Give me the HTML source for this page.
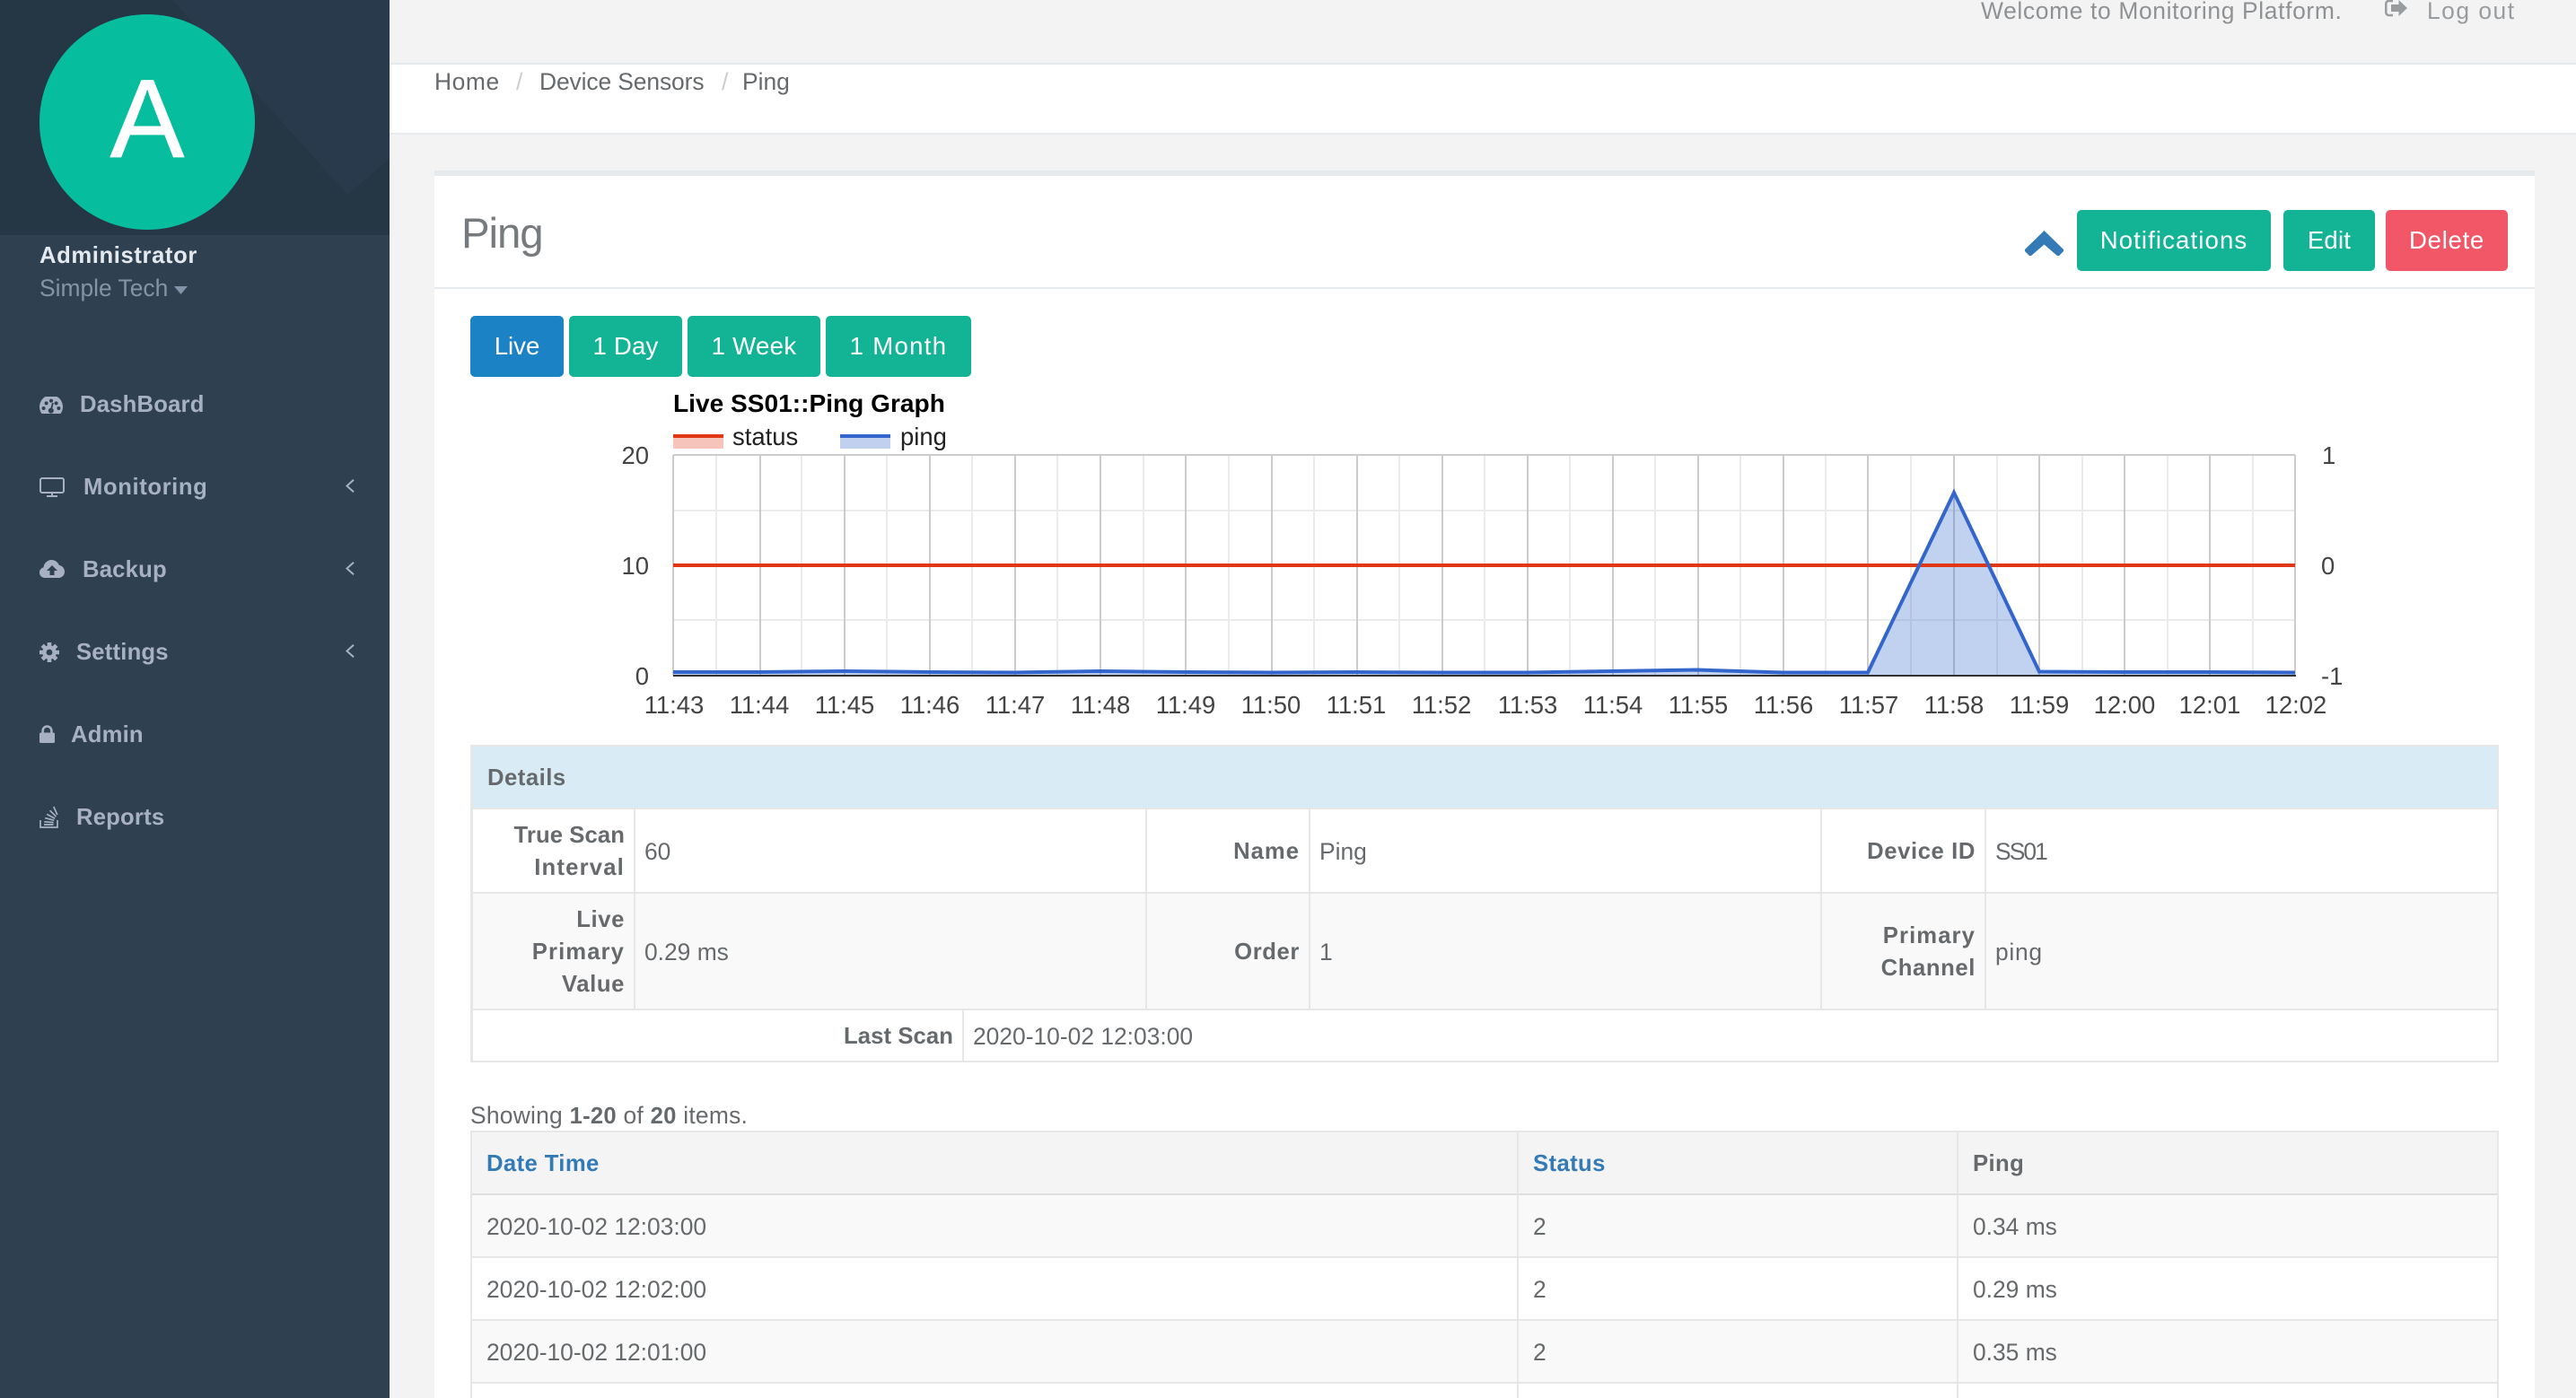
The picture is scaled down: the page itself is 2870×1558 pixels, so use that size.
<!DOCTYPE html>
<html lang="en">
<head>
<meta charset="utf-8">
<title>Ping</title>
<style>
*{box-sizing:border-box;margin:0;padding:0}
html,body{width:2870px;height:1558px;overflow:hidden;background:#f3f3f4}
body{position:relative;font-family:"Liberation Sans",Arial,sans-serif;font-size:26.4px;color:#676a6c}
a{color:inherit;text-decoration:none}
.abs{position:absolute;white-space:nowrap;line-height:36px}
aside{position:absolute;left:0;top:0;width:434px;height:1558px;background:#2f4050}
aside .hdr{position:absolute;left:0;top:0}
.avatar{position:absolute;left:44px;top:16px;width:240px;height:240px;border-radius:50%;background:#06bd9e;color:#fff;font-size:124px;line-height:235px;text-align:center;-webkit-text-stroke:.8px #fff}
nav{position:absolute;left:0;top:405px;width:434px;list-style:none}
nav li{position:relative;height:92px;line-height:92px;color:#a7b1c2;font-weight:bold;font-size:25.65px;letter-spacing:.2px}
nav li svg{position:absolute;left:44px;display:block}
nav li span{position:absolute;top:0}
nav li svg.ch{left:385px;top:37px}
.top{position:absolute;left:434px;top:0;width:2436px;height:72px;background:#f3f3f4;border-bottom:2px solid #e7eaec}
.crumb{position:absolute;left:434px;top:72px;width:2436px;height:78px;background:#fff;border-bottom:2px solid #e7eaec}
.card{position:absolute;left:484px;top:190px;width:2340px;height:1368px;background:#fff;border-top:6px solid #e7eaec}
.ctitle{position:absolute;left:484px;top:320px;width:2340px;height:2px;background:#e7eaec}
.btn{position:absolute;height:68px;line-height:68px;border-radius:5px;color:#fff;text-align:center;font-size:27.6px;white-space:nowrap}
.g{background:#12b495}.r{background:#f15766}.b{background:#1b83c5}
table{position:absolute;left:524px;width:2260px;table-layout:fixed;border-collapse:separate;border-spacing:0;border-left:2px solid #e7e7e7;border-right:2px solid #e7e7e7;line-height:36px}
table.det{border-left-width:3px}
th,td{box-sizing:border-box;border-bottom:2px solid #e7e7e7;border-right:2px solid #e7e7e7;vertical-align:middle;font-weight:normal}
tr>*:last-child{border-right:0}
th{font-weight:bold;font-size:25.65px;letter-spacing:.6px}
.det th{text-align:right;padding:2px 10px 0 0}
.det td{text-align:left;padding:2px 0 0 10px}
.det .head{text-align:left;padding:2px 0 0 16px;background:#d9ecf5;letter-spacing:.5px}
.alt>*{background:#f9f9f9}
.data th,.data td{padding:2px 0 0 16px;text-align:left;height:70px}
.data thead th{background:#f4f4f5;border-bottom-color:#dedede;letter-spacing:.4px}
.data a{color:#337ab7}
</style>
</head>
<body>

<aside>
  <svg class="hdr" width="434" height="262" viewBox="0 0 434 262">
    <rect width="434" height="262" fill="#283a4b"/>
    <polygon points="0,0 192,0 387,217 434,177 434,262 0,262" fill="#253645"/>
  </svg>
  <div class="avatar">A</div>
  <div class="abs" style="left:44px;top:267px;font-size:25.65px;font-weight:bold;color:#e4e8ef;letter-spacing:.6px">Administrator</div>
  <div class="abs" style="left:44px;top:303px;color:#8295a8">Simple Tech</div>
  <svg class="abs" style="left:194px;top:319px" width="15" height="9"><polygon points="0,0 15,0 7.5,9" fill="#8295a8"/></svg>
  <nav>
    <li><svg style="top:37px" width="26" height="19" viewBox="0 0 26 19"><path d="M2.5 19A13 13 0 1 1 23.5 19Z" fill="#a7b1c2"/><g fill="#2f4050"><circle cx="4.6" cy="13" r="2"/><circle cx="7.6" cy="7.4" r="2"/><circle cx="13" cy="4.6" r="2"/><circle cx="18.6" cy="7.4" r="2"/><circle cx="21.4" cy="13" r="2"/><circle cx="12.8" cy="15.6" r="3"/></g><path d="M12.6 15.5L15 7" stroke="#2f4050" stroke-width="1.8"/></svg><span style="left:89px">DashBoard</span></li>
    <li><svg style="top:35px" width="28" height="22" viewBox="0 0 28 22"><rect x="1" y="1" width="26" height="16" rx="2" fill="none" stroke="#a7b1c2" stroke-width="2"/><path d="M14 17V21M8 21H20" fill="none" stroke="#a7b1c2" stroke-width="2"/></svg><span style="left:93px;letter-spacing:.6px">Monitoring</span><svg class="ch" width="10" height="15" viewBox="0 0 10 15"><polyline points="9,.7 1.5,7.5 9,14.3" fill="none" stroke="#a7b1c2" stroke-width="2"/></svg></li>
    <li><svg style="top:35px" width="28" height="20" viewBox="0 0 28 20"><path d="M6 20C2.5 20 0 17.5 0 14C0 11 2 8.8 4.6 8.2C5 3.5 9 0 13.5 0C17.5 0 20.5 2.5 22 6C25.5 6.5 28 9.5 28 13.3C28 17 25 20 21.5 20Z" fill="#a7b1c2"/><polygon points="14,6 20,12 16.5,12 16.5,17 11.5,17 11.5,12 8,12" fill="#2f4050"/></svg><span style="left:92px">Backup</span><svg class="ch" width="10" height="15" viewBox="0 0 10 15"><polyline points="9,.7 1.5,7.5 9,14.3" fill="none" stroke="#a7b1c2" stroke-width="2"/></svg></li>
    <li><svg style="top:35px" width="22" height="22" viewBox="0 0 22 22"><g stroke="#a7b1c2" stroke-width="4.6"><path d="M11 0V22M0 11H22M3.2 3.2L18.8 18.8M18.8 3.2L3.2 18.8"/></g><circle cx="11" cy="11" r="7.8" fill="#a7b1c2"/><circle cx="11" cy="11" r="3.4" fill="#2f4050"/></svg><span style="left:85px">Settings</span><svg class="ch" width="10" height="15" viewBox="0 0 10 15"><polyline points="9,.7 1.5,7.5 9,14.3" fill="none" stroke="#a7b1c2" stroke-width="2"/></svg></li>
    <li><svg style="top:35px" width="17" height="20" viewBox="0 0 17 20"><rect y="8.5" width="17" height="11.5" rx="1.6" fill="#a7b1c2"/><path d="M3.6 9V6.4a4.9 4.9 0 0 1 9.8 0V9" fill="none" stroke="#a7b1c2" stroke-width="2.6"/></svg><span style="left:79px">Admin</span></li>
    <li><svg style="top:33px" width="21" height="25" viewBox="0 0 21 25"><path d="M1 16V24H20V16" fill="none" stroke="#a7b1c2" stroke-width="1.7"/><g stroke="#a7b1c2" stroke-width="1.7"><path d="M5 21H15.5M5.3 17.8L15.7 18.6M6.2 13.6L16.2 16.2M8.2 9.4L17.2 14.2M11.6 5.2L18.4 12M15.8 1L19.8 10"/></g></svg><span style="left:85px">Reports</span></li>
  </nav>
</aside>

<header class="top"></header>
<div class="abs" style="left:2207px;top:-6px;color:#8f9294;letter-spacing:.65px">Welcome to Monitoring Platform.</div>
<svg class="abs" style="left:2657px;top:0" width="26" height="20" viewBox="0 0 26 20"><path d="M9 1H4.5A3.2 3.2 0 0 0 1.3 4.2V13.8A3.2 3.2 0 0 0 4.5 17H9" fill="none" stroke="#999c9e" stroke-width="2.5"/><polygon points="15.5,0 25,9 15.5,18 15.5,13 7,13 7,5 15.5,5" fill="#999c9e"/></svg>
<a class="abs" style="left:2704px;top:-6px;color:#999c9e;letter-spacing:1.5px">Log out</a>

<div class="crumb"></div>
<div class="abs" style="left:484px;top:73px;letter-spacing:.6px">Home</div>
<div class="abs" style="left:575px;top:73px;color:#ccc">/</div>
<div class="abs" style="left:601px;top:73px;letter-spacing:-.1px">Device Sensors</div>
<div class="abs" style="left:804px;top:73px;color:#ccc">/</div>
<div class="abs" style="left:827px;top:73px">Ping</div>

<main class="card"></main>
<div class="ctitle"></div>
<h5 class="abs" style="left:514px;top:231px;font-size:47.4px;line-height:60px;font-weight:normal;color:#777a7c;letter-spacing:-1.1px">Ping</h5>

<svg class="abs" style="left:2256px;top:257px" width="43" height="28" viewBox="0 0 43 28"><polygon points="21.5,0 43,21 43,23 38,28 36,28 21.5,15.5 7,28 5,28 0,23 0,21" fill="#337ab7"/></svg>
<a class="btn g" style="left:2314px;top:234px;width:216px;letter-spacing:1.1px">Notifications</a>
<a class="btn g" style="left:2544px;top:234px;width:102px;letter-spacing:.2px">Edit</a>
<a class="btn r" style="left:2658px;top:234px;width:136px;letter-spacing:.7px">Delete</a>

<a class="btn b" style="left:524px;top:352px;width:104px">Live</a>
<a class="btn g" style="left:634px;top:352px;width:126px;letter-spacing:.2px">1 Day</a>
<a class="btn g" style="left:766px;top:352px;width:148px;letter-spacing:.3px">1 Week</a>
<a class="btn g" style="left:920px;top:352px;width:162px;letter-spacing:1.3px">1 Month</a>

<svg class="abs" style="left:0;top:0;line-height:normal" width="2870" height="830" viewBox="0 0 2870 830" font-family="'Liberation Sans',Arial,sans-serif" font-size="27.45">
  <text x="750" y="459" font-size="28.1" font-weight="bold" fill="#000">Live SS01::Ping Graph</text>
  <rect x="750" y="488" width="56" height="12" fill="#f7c4bc"/><rect x="750" y="484" width="56" height="4" fill="#e03814"/>
  <text x="816" y="496" fill="#222">status</text>
  <rect x="936" y="488" width="56" height="12" fill="#c1d0ee"/><rect x="936" y="484" width="56" height="4" fill="#3366cc"/>
  <text x="1003" y="496" fill="#222">ping</text>

  <g stroke="#ebebeb" stroke-width="2">
    <path d="M750 569H2557M750 691H2557"/>
    <path d="M798 507V753M893 507V753M988 507V753M1083 507V753M1178 507V753M1274 507V753M1369 507V753M1464 507V753M1559 507V753M1654 507V753M1749 507V753M1844 507V753M1939 507V753M2034 507V753M2129 507V753M2225 507V753M2320 507V753M2415 507V753M2510 507V753"/>
  </g>
  <g stroke="#cccccc" stroke-width="2">
    <path d="M847 507V753M941 507V753M1036 507V753M1131 507V753M1226 507V753M1321 507V753M1417 507V753M1512 507V753M1607 507V753M1702 507V753M1797 507V753M1892 507V753M1987 507V753M2081 507V753M2177 507V753M2272 507V753M2367 507V753M2462 507V753"/>
    <path d="M750 507H2557M750 507V753M2557 507V753"/>
  </g>
  <polygon points="750,753 750,749 845,749 940,748 1036,749 1131,749.5 1226,748 1321,749 1416,749.5 1511,749 1606,749.5 1701,749.5 1796,748 1891,746.5 1986,749.5 2081,749.5 2177,549 2272,748.5 2367,749 2462,749 2557,749.5 2557,753" fill="#3366cc" fill-opacity=".3"/>
  <path d="M750 630H2557" stroke="#e03814" stroke-width="4"/>
  <polyline points="750,749 845,749 940,748 1036,749 1131,749.5 1226,748 1321,749 1416,749.5 1511,749 1606,749.5 1701,749.5 1796,748 1891,746.5 1986,749.5 2081,749.5 2177,549 2272,748.5 2367,749 2462,749 2557,749.5" fill="none" stroke="#3366cc" stroke-width="4"/>
  <path d="M750 753H2558" stroke="#333" stroke-width="2"/>

  <g fill="#444" text-anchor="end">
    <text x="723" y="517">20</text><text x="723" y="640">10</text><text x="723" y="763">0</text>
  </g>
  <g fill="#444">
    <text x="2587" y="517">1</text><text x="2586" y="640">0</text><text x="2586" y="763">-1</text>
  </g>
  <g fill="#444" text-anchor="middle">
    <text x="751" y="795">11:43</text><text x="846" y="795">11:44</text><text x="941" y="795">11:45</text><text x="1036" y="795">11:46</text><text x="1131" y="795">11:47</text><text x="1226" y="795">11:48</text><text x="1321" y="795">11:49</text><text x="1416" y="795">11:50</text><text x="1511" y="795">11:51</text><text x="1606" y="795">11:52</text><text x="1702" y="795">11:53</text><text x="1797" y="795">11:54</text><text x="1892" y="795">11:55</text><text x="1987" y="795">11:56</text><text x="2082" y="795">11:57</text><text x="2177" y="795">11:58</text><text x="2272" y="795">11:59</text><text x="2367" y="795">12:00</text><text x="2462" y="795">12:01</text><text x="2558" y="795">12:02</text>
  </g>
</svg>

<table class="det" style="top:830px;border-top:2px solid #e7e7e7">
  <colgroup><col style="width:181px"><col style="width:570px"><col style="width:182px"><col style="width:570px"><col style="width:183px"><col></colgroup>
  <tr><th class="head" colspan="6" style="height:70px">Details</th></tr>
  <tr style="height:94px"><th><span style="letter-spacing:.1px">True Scan</span><br><span style="letter-spacing:1.2px">Interval</span></th><td>60</td><th><span style="letter-spacing:1px">Name</span></th><td>Ping</td><th>Device ID</th><td><span style="letter-spacing:-1.9px">SS01</span></td></tr>
  <tr class="alt" style="height:130px"><th>Live<br><span style="letter-spacing:1.1px">Primary</span><br>Value</th><td>0.29 ms</td><th>Order</th><td>1</td><th><span style="letter-spacing:1.1px">Primary</span><br>Channel</th><td><span style="letter-spacing:.7px">ping</span></td></tr>
</table>
<table class="det" style="top:1126px">
  <colgroup><col style="width:547px"><col></colgroup>
  <tr style="height:58px"><th style="letter-spacing:.1px">Last Scan</th><td>2020-10-02 12:03:00</td></tr>
</table>

<div class="abs" style="left:524px;top:1225px;letter-spacing:.25px">Showing <b style="font-size:25.65px">1-20</b> of <b style="font-size:25.65px">20</b> items.</div>

<table class="data" style="top:1260px;border-top:2px solid #e7e7e7">
  <colgroup><col style="width:1166px"><col style="width:490px"><col></colgroup>
  <thead><tr><th><a>Date Time</a></th><th><a>Status</a></th><th>Ping</th></tr></thead>
  <tbody>
    <tr class="alt"><td>2020-10-02 12:03:00</td><td>2</td><td>0.34 ms</td></tr>
    <tr><td>2020-10-02 12:02:00</td><td>2</td><td>0.29 ms</td></tr>
    <tr class="alt"><td>2020-10-02 12:01:00</td><td>2</td><td>0.35 ms</td></tr>
    <tr><td>2020-10-02 12:00:00</td><td>2</td><td>0.31 ms</td></tr>
  </tbody>
</table>

</body>
</html>
